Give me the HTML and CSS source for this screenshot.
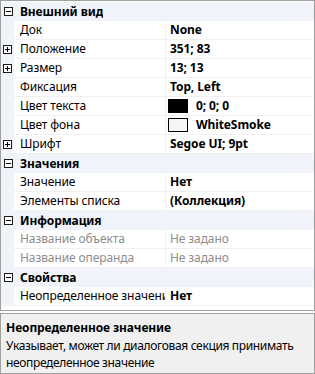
FILE: index.html
```html
<!DOCTYPE html>
<html lang="ru">
<head>
    <meta charset="UTF-8">
    <meta name="viewport" content="width=device-width, initial-scale=1.0">
    <title>Свойства</title>
    <link rel="stylesheet" href="styles.css">
</head>
<body>
    <div class="grid">
        <div class="row cat"><span class="toggle minus"></span><span class="name">Внешний вид</span></div>
        <div class="row"><span class="margin"></span><span class="name">Док</span><span class="value">None</span></div>
        <div class="row"><span class="margin"><span class="toggle plus"></span></span><span class="name">Положение</span><span class="value">351; 83</span></div>
        <div class="row"><span class="margin"><span class="toggle plus"></span></span><span class="name">Размер</span><span class="value">13; 13</span></div>
        <div class="row"><span class="margin"></span><span class="name">Фиксация</span><span class="value">Top, Left</span></div>
        <div class="row"><span class="margin"></span><span class="name">Цвет текста</span><span class="value"><span class="swatch black"></span>0; 0; 0</span></div>
        <div class="row"><span class="margin"></span><span class="name">Цвет фона</span><span class="value"><span class="swatch smoke"></span>WhiteSmoke</span></div>
        <div class="row"><span class="margin"><span class="toggle plus"></span></span><span class="name">Шрифт</span><span class="value">Segoe UI; 9pt</span></div>
        <div class="row cat"><span class="toggle minus"></span><span class="name">Значения</span></div>
        <div class="row"><span class="margin"></span><span class="name">Значение</span><span class="value">Нет</span></div>
        <div class="row"><span class="margin"></span><span class="name">Элементы списка</span><span class="value">(Коллекция)</span></div>
        <div class="row cat"><span class="toggle minus"></span><span class="name">Информация</span></div>
        <div class="row disabled"><span class="margin"></span><span class="name">Название объекта</span><span class="value">Не задано</span></div>
        <div class="row disabled"><span class="margin"></span><span class="name">Название операнда</span><span class="value">Не задано</span></div>
        <div class="row cat"><span class="toggle minus"></span><span class="name">Свойства</span></div>
        <div class="row"><span class="margin"></span><span class="name">Неопределенное значение</span><span class="value">Нет</span></div>
    </div>

    <div class="help">
        <p class="help-title">Неопределенное значение</p>
        <p class="help-text">Указывает, может ли диалоговая секция принимать неопределенное значение</p>
    </div>
</body>
</html>
```

FILE: styles.css
```css
body
{
    margin: 0;
    background: #ffffff;
    font-family: "Noto Sans", "Open Sans", sans-serif;
    font-size: 12px;
    letter-spacing: -0.1px;
    color: #000000;
}
.grid
{
    height: 311px;
    box-sizing: border-box;
    border: 1px solid #a0a0a0;
    padding-top: 1px;
    background: #ffffff;
}
.row
{
    display: grid;
    grid-template-columns: 13px 152px 1fr;
    height: 19px;
    line-height: 18px;
}
.margin
{
    background: #f0f4fa;
    display: flex;
    align-items: center;
    justify-content: center;
}
.row .name
{
    padding-left: 6px;
    white-space: nowrap;
    overflow: hidden;
    border-bottom: 1px solid #f0f0f0;
    border-right: 1px solid #f0f0f0;
}
.row .value
{
    padding-left: 4px;
    font-weight: bold;
    white-space: nowrap;
    overflow: hidden;
    border-bottom: 1px solid #f0f0f0;
    display: flex;
    align-items: center;
}
.row.cat
{
    background: #f0f4fa;
    display: flex;
    align-items: center;
}
.row.cat .name
{
    font-weight: bold;
    border: none;
}
.row.cat .toggle
{
    margin-left: 3px;
    margin-right: 1px;
}
.toggle
{
    width: 9px;
    height: 9px;
    box-sizing: border-box;
    border: 1px solid #1a1a1a;
    background: #ffffff;
    position: relative;
}
.toggle::before
{
    content: "";
    position: absolute;
    left: 1px;
    top: 3px;
    width: 5px;
    height: 1px;
    background: #000000;
}
.toggle.plus::after
{
    content: "";
    position: absolute;
    left: 3px;
    top: 1px;
    width: 1px;
    height: 5px;
    background: #000000;
}
.swatch
{
    width: 20px;
    height: 14px;
    box-sizing: border-box;
    border: 1px solid #000000;
    margin-right: 8px;
    margin-left: -2px;
}
.swatch.black
{
    background: #000000;
}
.swatch.smoke
{
    background: #f5f5f5;
}
.row.disabled .name,
.row.disabled .value
{
    color: #8d8d8d;
    font-weight: normal;
}
.help
{
    margin-top: 2px;
    height: 61px;
    box-sizing: border-box;
    border: 1px solid #a0a0a0;
    background: #f0f0f0;
    padding: 5px 5px 0 5px;
}
.help p
{
    margin: 0;
    line-height: 17px;
}
.help-title
{
    font-weight: bold;
    margin-bottom: 1px !important;
}
.help-text
{
    letter-spacing: -0.35px;
}
```
